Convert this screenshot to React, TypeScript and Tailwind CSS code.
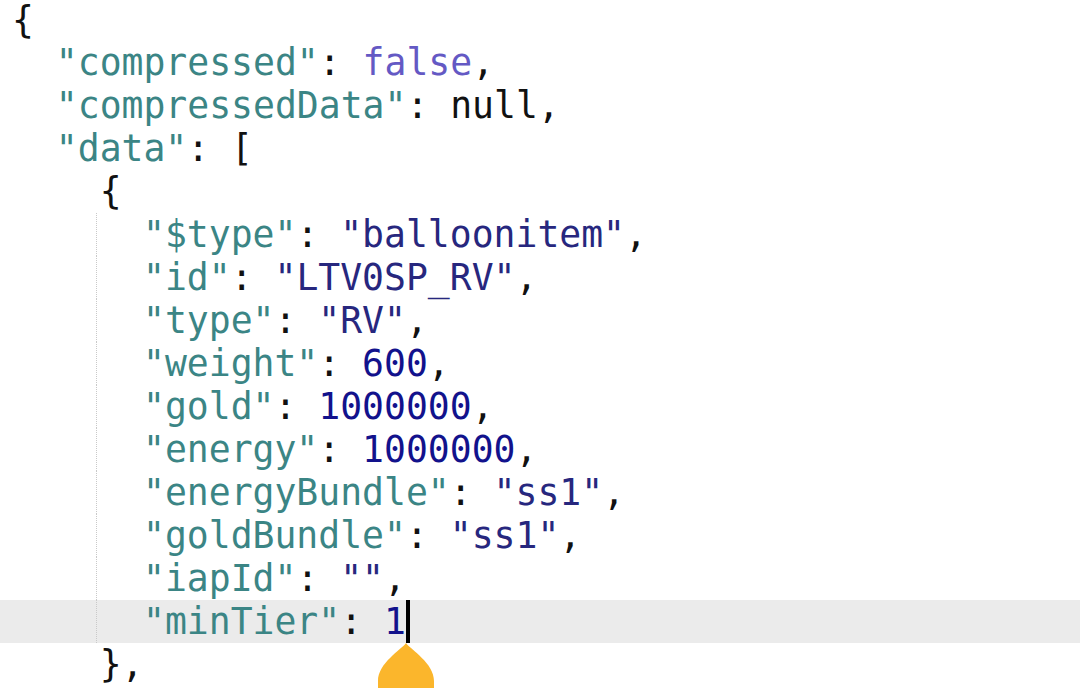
import React from "react";

const K = ({ children }: { children: React.ReactNode }) => (
  <span className="text-[#3b8585]">{children}</span>
);
const S = ({ children }: { children: React.ReactNode }) => (
  <span className="text-[#27277e]">{children}</span>
);
const N = ({ children }: { children: React.ReactNode }) => (
  <span className="text-[#12128c]">{children}</span>
);
const P = ({ children }: { children: React.ReactNode }) => (
  <span className="text-[#111111]">{children}</span>
);

function Row({ children, first }: { children: React.ReactNode; first?: boolean }) {
  return (
    <div className={"flex items-center whitespace-pre pl-[12px] " + (first ? "h-[41px]" : "h-[43px]")}>
      {children}
    </div>
  );
}

function GRow({ children, hl }: { children: React.ReactNode; hl?: boolean }) {
  return (
    <div className={"flex h-[43px] whitespace-pre " + (hl ? "bg-[#ebebeb]" : "")}>
      <div className="w-[96px] shrink-0" />
      <div className="w-0 self-stretch border-l-[1.5px] border-dotted border-[#c9c9c9]" />
      <div className="flex items-center pl-[46px]">{children}</div>
    </div>
  );
}

export default function App() {
  return (
    <div
      className="relative h-[688px] w-[1080px] overflow-hidden bg-white text-[36.4px] leading-[41px]"
      style={{ fontFamily: '"DejaVu Sans Mono", "Liberation Mono", monospace' }}
    >
      <Row first><P>{"{"}</P></Row>
      <Row><P>{"  "}</P><K>"compressed"</K><P>: </P><span className="text-[#6459c4]">false</span><P>,</P></Row>
      <Row><P>{"  "}</P><K>"compressedData"</K><P>: null,</P></Row>
      <Row><P>{"  "}</P><K>"data"</K><P>: [</P></Row>
      <Row><P>{"    {"}</P></Row>
      <GRow><K>"$type"</K><P>: </P><S>"balloonitem"</S><P>,</P></GRow>
      <GRow><K>"id"</K><P>: </P><S>"LTV0SP_RV"</S><P>,</P></GRow>
      <GRow><K>"type"</K><P>: </P><S>"RV"</S><P>,</P></GRow>
      <GRow><K>"weight"</K><P>: </P><N>600</N><P>,</P></GRow>
      <GRow><K>"gold"</K><P>: </P><N>1000000</N><P>,</P></GRow>
      <GRow><K>"energy"</K><P>: </P><N>1000000</N><P>,</P></GRow>
      <GRow><K>"energyBundle"</K><P>: </P><S>"ss1"</S><P>,</P></GRow>
      <GRow><K>"goldBundle"</K><P>: </P><S>"ss1"</S><P>,</P></GRow>
      <GRow><K>"iapId"</K><P>: </P><S>""</S><P>,</P></GRow>
      <GRow hl>
        <K>"minTier"</K><P>: </P><N>1</N>
        <span className="relative inline-block h-[43px] w-[4px] bg-black">
          <svg
            className="absolute left-[-28px] top-[43px]"
            width="56"
            height="50"
            viewBox="0 0 56 50"
          >
            <path d="M28 0 C33 7 56 20 56 38 L56 50 L0 50 L0 38 C0 20 23 7 28 0 Z" fill="#fbb62c" />
          </svg>
        </span>
      </GRow>
      <Row><P>{"    },"}</P></Row>
    </div>
  );
}
